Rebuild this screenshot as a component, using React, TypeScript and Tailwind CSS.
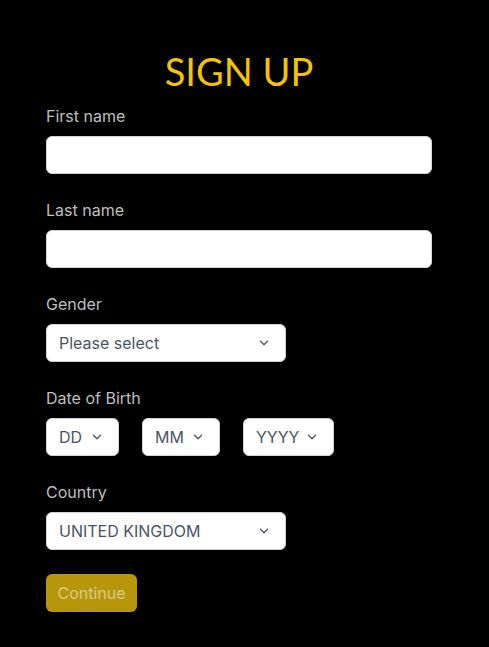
import { ChevronDown } from "lucide-react"

function Label({ children }: { children: React.ReactNode }) {
  return <div className="text-[16px] leading-[20px] text-[#bfbfbf]">{children}</div>
}

function TextInput() {
  return <div className="mt-[10px] h-[38px] w-full rounded-md border border-[#d1d5db] bg-white" />
}

function Select({ value, width }: { value: string; width: string }) {
  return (
    <div
      className={`flex h-[38px] items-center rounded-md border border-[#d1d5db] bg-white pl-[12px] text-[16px] text-[#4b5563] ${width}`}
    >
      <span>{value}</span>
      <ChevronDown className="ml-auto mr-[14px] h-[14px] w-[14px] text-[#4b5563]" strokeWidth={2.2} />
    </div>
  )
}

export default function App() {
  return (
    <div className="min-h-[647px] w-full bg-black font-['Inter',sans-serif]">
      <div className="ml-[46px] w-[386px] pt-[48px]">
        <h1 className="text-center font-['Lato',sans-serif] text-[38px] leading-[46px] text-[#f5c400]">
          SIGN UP
        </h1>
        <div className="mt-[12px]">
          <Label>First name</Label>
          <TextInput />
        </div>
        <div className="mt-[26px]">
          <Label>Last name</Label>
          <TextInput />
        </div>
        <div className="mt-[26px]">
          <Label>Gender</Label>
          <div className="mt-[10px]">
            <Select value="Please select" width="w-[240px]" />
          </div>
        </div>
        <div className="mt-[26px]">
          <Label>Date of Birth</Label>
          <div className="mt-[10px] flex gap-[23px]">
            <Select value="DD" width="w-[73px]" />
            <Select value="MM" width="w-[78px]" />
            <Select value="YYYY" width="w-[91px]" />
          </div>
        </div>
        <div className="mt-[26px]">
          <Label>Country</Label>
          <div className="mt-[10px]">
            <Select value="UNITED KINGDOM" width="w-[240px]" />
          </div>
        </div>
        <button className="mt-[24px] h-[38px] w-[91px] rounded-md bg-[#b8960b] text-[16px] text-[#d8c98a]">
          Continue
        </button>
      </div>
    </div>
  )
}
